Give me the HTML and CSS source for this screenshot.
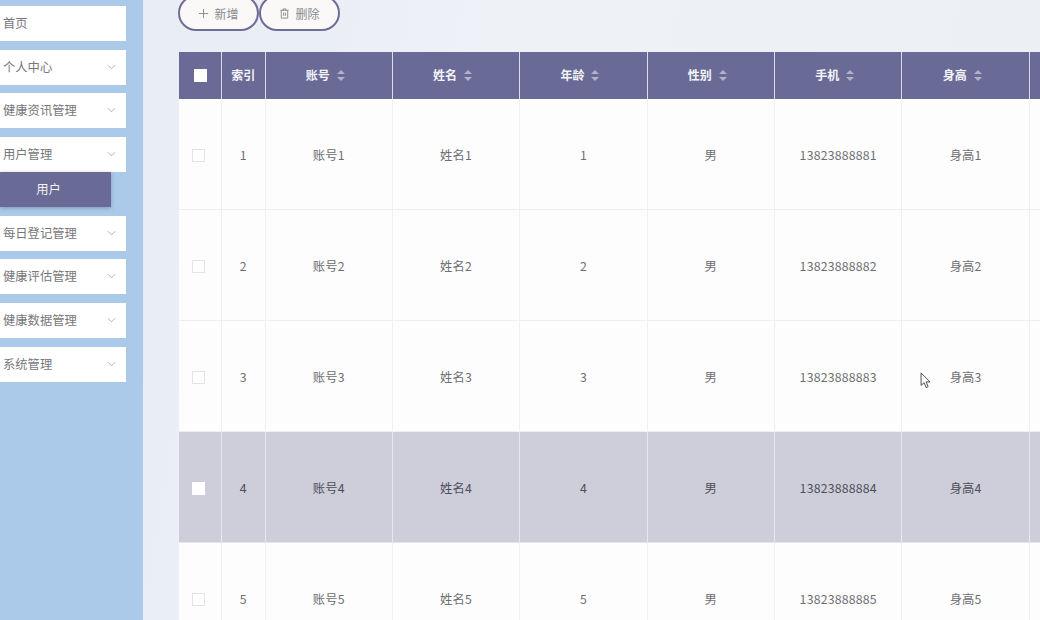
FILE: index.html
```html
<!DOCTYPE html>
<html lang="zh-CN">
<head>
    <meta charset="UTF-8">
    <title>用户管理</title>
    <link rel="stylesheet" href="styles.css">
</head>
<body>
    <div class="layout">
        <aside class="sidebar">
            <div class="menu-item">首页</div>
            <div class="menu-item">个人中心<svg class="chevron" viewBox="0 0 10 6"><path d="M1 1l4 4 4-4"/></svg></div>
            <div class="menu-item">健康资讯管理<svg class="chevron" viewBox="0 0 10 6"><path d="M1 1l4 4 4-4"/></svg></div>
            <div class="menu-item open">用户管理<svg class="chevron" viewBox="0 0 10 6"><path d="M1 1l4 4 4-4"/></svg></div>
            <div class="submenu-item">用户</div>
            <div class="menu-item">每日登记管理<svg class="chevron" viewBox="0 0 10 6"><path d="M1 1l4 4 4-4"/></svg></div>
            <div class="menu-item">健康评估管理<svg class="chevron" viewBox="0 0 10 6"><path d="M1 1l4 4 4-4"/></svg></div>
            <div class="menu-item">健康数据管理<svg class="chevron" viewBox="0 0 10 6"><path d="M1 1l4 4 4-4"/></svg></div>
            <div class="menu-item">系统管理<svg class="chevron" viewBox="0 0 10 6"><path d="M1 1l4 4 4-4"/></svg></div>
        </aside>
        <main class="content">
            <div class="toolbar">
                <button class="btn" type="button">
                    <svg class="btn-icon" viewBox="0 0 12 12"><path d="M6 1v10M1 6h10"/></svg>新增
                </button>
                <button class="btn" type="button">
                    <svg class="btn-icon" viewBox="0 0 12 12"><path d="M1.5 2.5h9M4.5 2.5V1h3v1.5M2.5 2.5V11h7V2.5M5 5v3.5M7 5v3.5"/></svg>删除
                </button>
            </div>
            <table class="data-table">
                <colgroup>
                    <col class="col-check"><col class="col-index"><col class="col-data"><col class="col-data"><col class="col-data"><col class="col-data"><col class="col-data"><col class="col-data"><col class="col-data">
                </colgroup>
                <thead>
                    <tr>
                        <th><span class="checkbox"></span></th>
                        <th>索引</th>
                        <th class="sortable">账号<span class="sort"></span></th>
                        <th class="sortable">姓名<span class="sort"></span></th>
                        <th class="sortable">年龄<span class="sort"></span></th>
                        <th class="sortable">性别<span class="sort"></span></th>
                        <th class="sortable">手机<span class="sort"></span></th>
                        <th class="sortable">身高<span class="sort"></span></th>
                        <th></th>
                    </tr>
                </thead>
                <tbody>
                    <tr><td><span class="checkbox"></span></td><td>1</td><td>账号1</td><td>姓名1</td><td>1</td><td>男</td><td>13823888881</td><td>身高1</td><td></td></tr>
                    <tr><td><span class="checkbox"></span></td><td>2</td><td>账号2</td><td>姓名2</td><td>2</td><td>男</td><td>13823888882</td><td>身高2</td><td></td></tr>
                    <tr><td><span class="checkbox"></span></td><td>3</td><td>账号3</td><td>姓名3</td><td>3</td><td>男</td><td>13823888883</td><td>身高3</td><td></td></tr>
                    <tr class="hover"><td><span class="checkbox"></span></td><td>4</td><td>账号4</td><td>姓名4</td><td>4</td><td>男</td><td>13823888884</td><td>身高4</td><td></td></tr>
                    <tr><td><span class="checkbox"></span></td><td>5</td><td>账号5</td><td>姓名5</td><td>5</td><td>男</td><td>13823888885</td><td>身高5</td><td></td></tr>
                </tbody>
            </table>
        </main>
    </div>
    <svg class="cursor" viewBox="0 0 13 19"><path d="M1 1v14l3.4-3 2.3 5.4 2.2-1-2.3-5.3H11z"/></svg>
</body>
</html>
```

FILE: styles.css
```css
html, body {
    height: 100%;
}
body {
    font-family: "Noto Sans CJK SC", "Liberation Sans", sans-serif;
    font-size: 12.3px;
    margin: 0;
    overflow: hidden;
    color: #6e6e72;
}
.layout {
    display: flex;
    height: 620px;
    overflow: hidden;
}
.sidebar {
    flex: 0 0 143px;
    padding-top: 6px;
    background-color: #abc9e9;
    box-sizing: border-box;
}
.menu-item {
    display: flex;
    align-items: center;
    justify-content: space-between;
    width: 126px;
    height: 35px;
    margin-bottom: 8.7px;
    padding: 0 10px 1px 3px;
    box-sizing: border-box;
    background: #fff;
    color: #77777b;
}
.menu-item.open {
    margin-bottom: 0;
}
.chevron {
    width: 9px;
    height: 6px;
    fill: none;
    stroke: #a3a7ae;
    stroke-width: 1;
}
.submenu-item {
    width: 111px;
    height: 35px;
    margin-bottom: 8.7px;
    padding-right: 14px;
    box-sizing: border-box;
    line-height: 34px;
    text-align: center;
    color: #f2f2f7;
    background-color: #6a6a96;
    box-shadow: 0 1px 4px rgba(60, 60, 90, 0.35);
}
.content {
    flex: 1;
    min-width: 0;
    padding-left: 36px;
    background: linear-gradient(100deg, #e8edf5 0%, #eef1f6 35%, #ecf0f5 100%);
}
.toolbar {
    display: flex;
    height: 57px;
    margin-top: -5px;
    margin-left: -1px;
}
.btn {
    display: flex;
    align-items: center;
    justify-content: center;
    width: 81px;
    height: 36px;
    padding: 0;
    font: inherit;
    font-size: 12px;
    color: #8a8a90;
    background: #faf9f7;
    border: 2.5px solid #6e6d96;
    border-radius: 18px;
}
.btn-icon {
    width: 11px;
    height: 11px;
    margin-right: 5px;
    fill: none;
    stroke: #85858b;
    stroke-width: 1;
}
.data-table {
    width: 957px;
    table-layout: fixed;
    border-collapse: collapse;
    background: #fdfdfd;
}
.col-check {
    width: 42.5px;
}
.col-index {
    width: 43.5px;
}
.col-data {
    width: 127.4px;
}
.data-table th {
    height: 45px;
    padding: 0 0 2px;
    font-size: 12px;
    font-weight: 700;
    color: #f4f4f8;
    background-color: #696a96;
    border-right: 1px solid #dcdcea;
}
.data-table th.sortable {
    padding-right: 6px;
}
.data-table td {
    height: 109px;
    padding: 1px 0 0;
    text-align: center;
    letter-spacing: 0.2px;
    border-right: 1px solid #f0f0f4;
    border-bottom: 1px solid #f0f0f4;
}
.data-table .hover td {
    color: #4e4e58;
    background-color: #cdceda;
    border-right-color: #e6e6ee;
    border-bottom-color: #e6e6ee;
}
.checkbox {
    display: inline-block;
    width: 11px;
    height: 11px;
    margin-bottom: 1px;
    vertical-align: middle;
    background: #fff;
    border: 1px solid #e4e4e6;
}
td .checkbox {
    margin-right: 4px;
}
th .checkbox {
    border-color: #fff;
}
.hover .checkbox {
    border-color: #fff;
}
.sort {
    display: inline-block;
    position: relative;
    width: 9px;
    height: 11px;
    margin-left: 7px;
    vertical-align: -1px;
}
.sort::before, .sort::after {
    content: "";
    position: absolute;
    left: 0;
    border-left: 4.5px solid transparent;
    border-right: 4.5px solid transparent;
}
.sort::before {
    top: 0;
    border-bottom: 4.5px solid #b0b1ca;
}
.sort::after {
    bottom: 0;
    border-top: 4.5px solid #b0b1ca;
}
.cursor {
    position: absolute;
    left: 920px;
    top: 372px;
    width: 12px;
    height: 17px;
    fill: #fff;
    stroke: #3c3c40;
    stroke-width: 1;
}
```
